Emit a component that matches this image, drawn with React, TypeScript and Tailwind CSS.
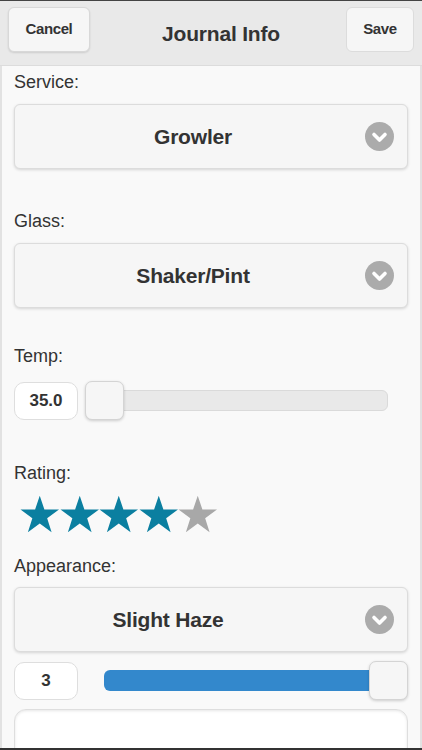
const font = { fontFamily: '"Liberation Sans", Arial, sans-serif' };

const Chevron = () => (
  <svg width="29" height="29" viewBox="0 0 29 29" className="shrink-0">
    <circle cx="14.5" cy="14.5" r="14.5" fill="#ababab" />
    <path d="M9 12.5 L14.5 18 L20 12.5" fill="none" stroke="#fff" strokeWidth="3.6" strokeLinecap="round" strokeLinejoin="round" />
  </svg>
);

const Star = ({ on }: { on: boolean }) => (
  <svg width="39.5" height="38" viewBox="0 0 40 38" className="shrink-0">
    <polygon
      points="20,0.5 24.7,14.5 39.5,14.5 27.5,23.3 32,37.5 20,28.7 8,37.5 12.5,23.3 0.5,14.5 15.3,14.5"
      fill={on ? "#0b7fa0" : "#a8a8a8"}
    />
  </svg>
);

const Select = ({ value, pr }: { value: string; pr: string }) => (
  <div className="relative flex h-[65px] items-center rounded-[6px] border border-[#dcdcdc] bg-[#f6f6f6] shadow-[0_1px_3px_rgba(0,0,0,0.15)]">
    <div className={`flex-1 text-center text-[21px] font-bold text-[#333] tracking-[-0.2px] ${pr}`}>{value}</div>
    <div className="absolute right-[13px] top-[17px]">
      <Chevron />
    </div>
  </div>
);

const Label = ({ text, mt }: { text: string; mt: string }) => (
  <div className={`h-[22px] text-[18px] leading-[22px] text-[#333] ${mt}`}>{text}</div>
);

const NumBox = ({ v }: { v: string }) => (
  <div className="flex h-[38px] w-[64px] shrink-0 items-center justify-center rounded-[10px] border border-[#dedede] bg-white text-[17px] font-bold text-[#333]">
    {v}
  </div>
);

export default function App() {
  return (
    <div style={font} className="flex h-[750px] w-[422px] flex-col overflow-hidden bg-[#f9f9f9]">
      <div className="h-px bg-[#444]" />
      <header className="flex h-[65px] shrink-0 items-start justify-between border-b border-[#dcdcdc] bg-[#e9e9e9] px-[8px] pt-[6px]">
        <button className="h-[45px] w-[82px] rounded-[6px] border border-[#d8d8d8] bg-[#f6f6f6] text-[15px] font-bold text-[#333] tracking-[-0.4px] shadow-[0_1px_2px_rgba(0,0,0,0.12)]">
          Cancel
        </button>
        <h1 className="mt-[12px] ml-[6px] text-[21px] leading-[30px] font-bold text-[#333] tracking-[-0.2px]">Journal Info</h1>
        <button className="h-[45px] w-[68px] rounded-[6px] border border-[#dcdcdc] bg-[#f6f6f6] text-[15px] font-bold text-[#333] tracking-[-0.4px]">
          Save
        </button>
      </header>
      <main className="flex flex-1 flex-col overflow-hidden border-x-2 border-[#e2e2e2] px-[12px]">
        <Label text="Service:" mt="mt-[5px]" />
        <div className="mt-[11px]">
          <Select value="Growler" pr="pr-[36px]" />
        </div>
        <Label text="Glass:" mt="mt-[41px]" />
        <div className="mt-[11px]">
          <Select value="Shaker/Pint" pr="pr-[36px]" />
        </div>
        <Label text="Temp:" mt="mt-[37px]" />
        <div className="mt-[14px] flex items-center gap-[7px]">
          <NumBox v="35.0" />
          <div className="relative flex h-[39px] w-[303px] items-center">
            <div className="h-[21px] w-full rounded-[6px] border border-[#dadada] bg-[#e9e9e9]" />
            <div className="absolute left-0 top-0 h-[39px] w-[39px] rounded-[7px] border border-[#d4d4d4] bg-[#f6f6f6] shadow-[0_1px_3px_rgba(0,0,0,0.18)]" />
          </div>
        </div>
        <Label text="Rating:" mt="mt-[42px]" />
        <div className="mt-[11px] flex pl-[6px]">
          <Star on />
          <Star on />
          <Star on />
          <Star on />
          <Star on={false} />
        </div>
        <Label text="Appearance:" mt="mt-[22px]" />
        <div className="mt-[10px]">
          <Select value="Slight Haze" pr="pr-[86px]" />
        </div>
        <div className="mt-[9px] flex items-center">
          <NumBox v="3" />
          <div className="relative ml-[26px] flex h-[39px] flex-1 items-center">
            <div className="h-[21px] w-full rounded-[6px] bg-[#3388cc]" />
            <div className="absolute right-0 top-0 h-[39px] w-[39px] rounded-[7px] border border-[#d4d4d4] bg-[#f6f6f6] shadow-[0_1px_3px_rgba(0,0,0,0.18)]" />
          </div>
        </div>
        <div className="mt-[9px] h-[80px] shrink-0 rounded-[12px] border border-[#dedede] bg-white shadow-[inset_0_1px_3px_rgba(0,0,0,0.1)]" />
      </main>
      <div className="h-[2px] shrink-0 bg-[#333]" />
    </div>
  );
}
